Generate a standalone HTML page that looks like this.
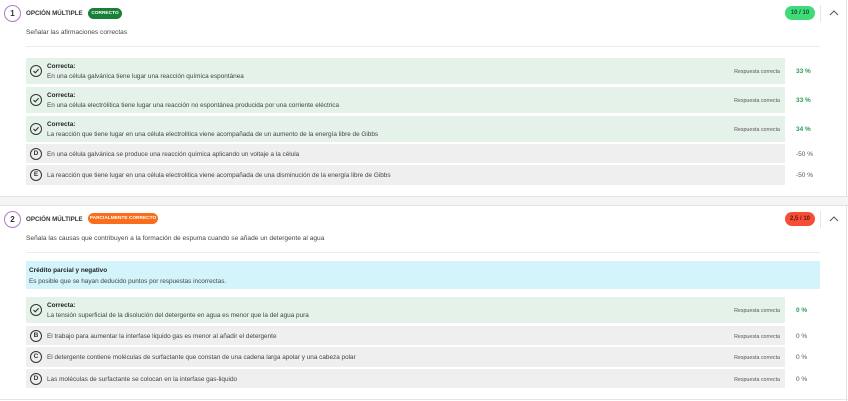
<!DOCTYPE html>
<html><head><meta charset="utf-8"><style>
*{margin:0;padding:0;box-sizing:border-box}
body{width:848px;height:401px;background:#fff;font-family:"Liberation Sans",sans-serif;color:#333;position:relative;overflow:hidden;font-size:6.4px}
.a{position:absolute}
.card{position:absolute;left:0;width:847px;background:#fff;border-right:1px solid #e2e2e2}
.num{position:absolute;left:4px;width:17px;height:17px;border:1px solid #b27bc9;border-radius:50%;text-align:center;line-height:15px;font-weight:bold;font-size:8px;color:#333}
.title{position:absolute;left:26px;font-weight:bold;font-size:6.2px;color:#333;white-space:nowrap}
.badge{position:absolute;height:11px;border-radius:6px;color:#fff;font-size:4.8px;font-weight:bold;text-align:center;line-height:11px;white-space:nowrap}
.score{position:absolute;left:785px;width:30px;height:14px;border-radius:7px;font-size:6px;font-weight:bold;text-align:center;line-height:14px}
.sep{position:absolute;left:820px;width:1px;height:17px;background:#e6e6e6}
.chev{position:absolute;left:829px;width:10px;height:8px}
.desc{position:absolute;left:26px;font-size:6.6px;color:#444;white-space:nowrap}
.hr{position:absolute;left:26px;width:794px;height:1px;background:#ececec}
.row{position:absolute;left:26px;width:759px;background:#efefef}
.row.g{background:#e5f2e9}
.ic{position:absolute;left:4px;width:12px;height:12px;border:1.2px solid #333;border-radius:50%;font-size:6.5px;font-weight:bold;text-align:center;line-height:10px;color:#333}
.txt{position:absolute;left:21px;color:#444;white-space:nowrap}
.rc{position:absolute;right:5px;font-size:5.3px;color:#555;white-space:nowrap}
.pct{position:absolute;left:796px;font-size:6.5px;color:#555}
.pct.g{color:#2a9d4e;font-weight:bold}
</style></head><body>
<div class="card" style="top:0;height:197px">
<div class="num" style="top:5px">1</div>
<div class="title" style="top:10px">OPCIÓN MÚLTIPLE</div>
<div class="badge" style="left:88px;top:8px;width:34px;background:#1a7f37">CORRECTO</div>
<div class="score" style="top:6px;background:#3ddc79;color:#1b4d2c">10 / 10</div>
<div class="sep" style="top:5px"></div>
<svg class="chev" style="top:9px" viewBox="0 0 10 8"><path d="M1 6 L5 2 L9 6" fill="none" stroke="#555" stroke-width="1"/></svg>
<div class="desc" style="top:29px">Señalar las afirmaciones correctas</div>
<div class="hr" style="top:46px"></div>

<div class="row g" style="top:58px;height:26px"><div class="ic" style="top:7px"><svg width="10" height="10" viewBox="0 0 10 10" style="display:block"><path d="M2.5 5 L4.3 6.8 L7.6 3.3" fill="none" stroke="#333" stroke-width="1.1"/></svg></div><div class="txt" style="top:5px;font-weight:bold;color:#222">Correcta:</div><div class="txt" style="top:15px">En una célula galvánica tiene lugar una reacción química espontánea</div><div class="rc" style="top:11px">Respuesta correcta</div></div>
<div class="pct g" style="top:68px">33 %</div>

<div class="row g" style="top:87px;height:26px"><div class="ic" style="top:7px"><svg width="10" height="10" viewBox="0 0 10 10" style="display:block"><path d="M2.5 5 L4.3 6.8 L7.6 3.3" fill="none" stroke="#333" stroke-width="1.1"/></svg></div><div class="txt" style="top:5px;font-weight:bold;color:#222">Correcta:</div><div class="txt" style="top:15px">En una célula electrólitica tiene lugar una reacción no espontánea producida por una corriente eléctrica</div><div class="rc" style="top:11px">Respuesta correcta</div></div>
<div class="pct g" style="top:97px">33 %</div>

<div class="row g" style="top:116px;height:26px"><div class="ic" style="top:7px"><svg width="10" height="10" viewBox="0 0 10 10" style="display:block"><path d="M2.5 5 L4.3 6.8 L7.6 3.3" fill="none" stroke="#333" stroke-width="1.1"/></svg></div><div class="txt" style="top:5px;font-weight:bold;color:#222">Correcta:</div><div class="txt" style="top:15px">La reacción que tiene lugar en una célula electrolitica viene acompañada de un aumento de la energía libre de Gibbs</div><div class="rc" style="top:11px">Respuesta correcta</div></div>
<div class="pct g" style="top:126px">34 %</div>

<div class="row" style="top:144px;height:19px"><div class="ic" style="top:4px">D</div><div class="txt" style="top:7px">En una célula galvánica se produce una reacción química aplicando un voltaje a la célula</div></div>
<div class="pct" style="top:151px">-50 %</div>

<div class="row" style="top:165px;height:20px"><div class="ic" style="top:4px">E</div><div class="txt" style="top:7px">La reacción que tiene lugar en una célula electrolitica viene acompañada de una disminución de la energía libre de Gibbs</div></div>
<div class="pct" style="top:172px">-50 %</div>
</div>

<div class="a" style="top:196px;left:0;width:848px;height:10px;background:#f5f5f5;border-top:1px solid #e2e2e2;border-bottom:1px solid #e2e2e2"></div>

<div class="card" style="top:206px;height:195px">
<div class="num" style="top:5px">2</div>
<div class="title" style="top:10px">OPCIÓN MÚLTIPLE</div>
<div class="badge" style="left:88px;top:7px;width:70px;background:#f96d1c">PARCIALMENTE CORRECTO</div>
<div class="score" style="top:6px;background:#f64e36;color:#5a1a10">2,5 / 10</div>
<div class="sep" style="top:5px"></div>
<svg class="chev" style="top:9px" viewBox="0 0 10 8"><path d="M1 6 L5 2 L9 6" fill="none" stroke="#555" stroke-width="1"/></svg>
<div class="desc" style="top:29px">Señala las causas que contribuyen a la formación de espuma cuando se añade un detergente al agua</div>
<div class="hr" style="top:46px"></div>
<div class="a" style="left:26px;top:55px;width:794px;height:28px;background:#d4f4fb"><div class="a" style="left:3px;top:6px;font-weight:bold;color:#222">Crédito parcial y negativo</div><div class="a" style="left:3px;top:17px;color:#444">Es posible que se hayan deducido puntos por respuestas incorrectas.</div></div>

<div class="row g" style="top:91px;height:26px"><div class="ic" style="top:7px"><svg width="10" height="10" viewBox="0 0 10 10" style="display:block"><path d="M2.5 5 L4.3 6.8 L7.6 3.3" fill="none" stroke="#333" stroke-width="1.1"/></svg></div><div class="txt" style="top:5px;font-weight:bold;color:#222">Correcta:</div><div class="txt" style="top:15px">La tensión superficial de la disolución del detergente en agua es menor que la del agua pura</div><div class="rc" style="top:11px">Respuesta correcta</div></div>
<div class="pct g" style="top:101px">0 %</div>

<div class="row" style="top:120px;height:19px"><div class="ic" style="top:4px">B</div><div class="txt" style="top:7px">El trabajo para aumentar la interfase liquido gas es menor al añadir el detergente</div><div class="rc" style="top:8px">Respuesta correcta</div></div>
<div class="pct" style="top:127px">0 %</div>

<div class="row" style="top:141px;height:20px"><div class="ic" style="top:4px">C</div><div class="txt" style="top:7px">El detergente contiene moléculas de surfactante que constan de una cadena larga apolar y una cabeza polar</div><div class="rc" style="top:8px">Respuesta correcta</div></div>
<div class="pct" style="top:148px">0 %</div>

<div class="row" style="top:163px;height:19px"><div class="ic" style="top:4px">D</div><div class="txt" style="top:7px">Las moléculas de surfactante se colocan en la interfase gas-liquido</div><div class="rc" style="top:8px">Respuesta correcta</div></div>
<div class="pct" style="top:170px">0 %</div>
<div class="a" style="left:0;top:193px;width:848px;height:1px;background:#e6e6e6"></div>
</div>
</body></html>
